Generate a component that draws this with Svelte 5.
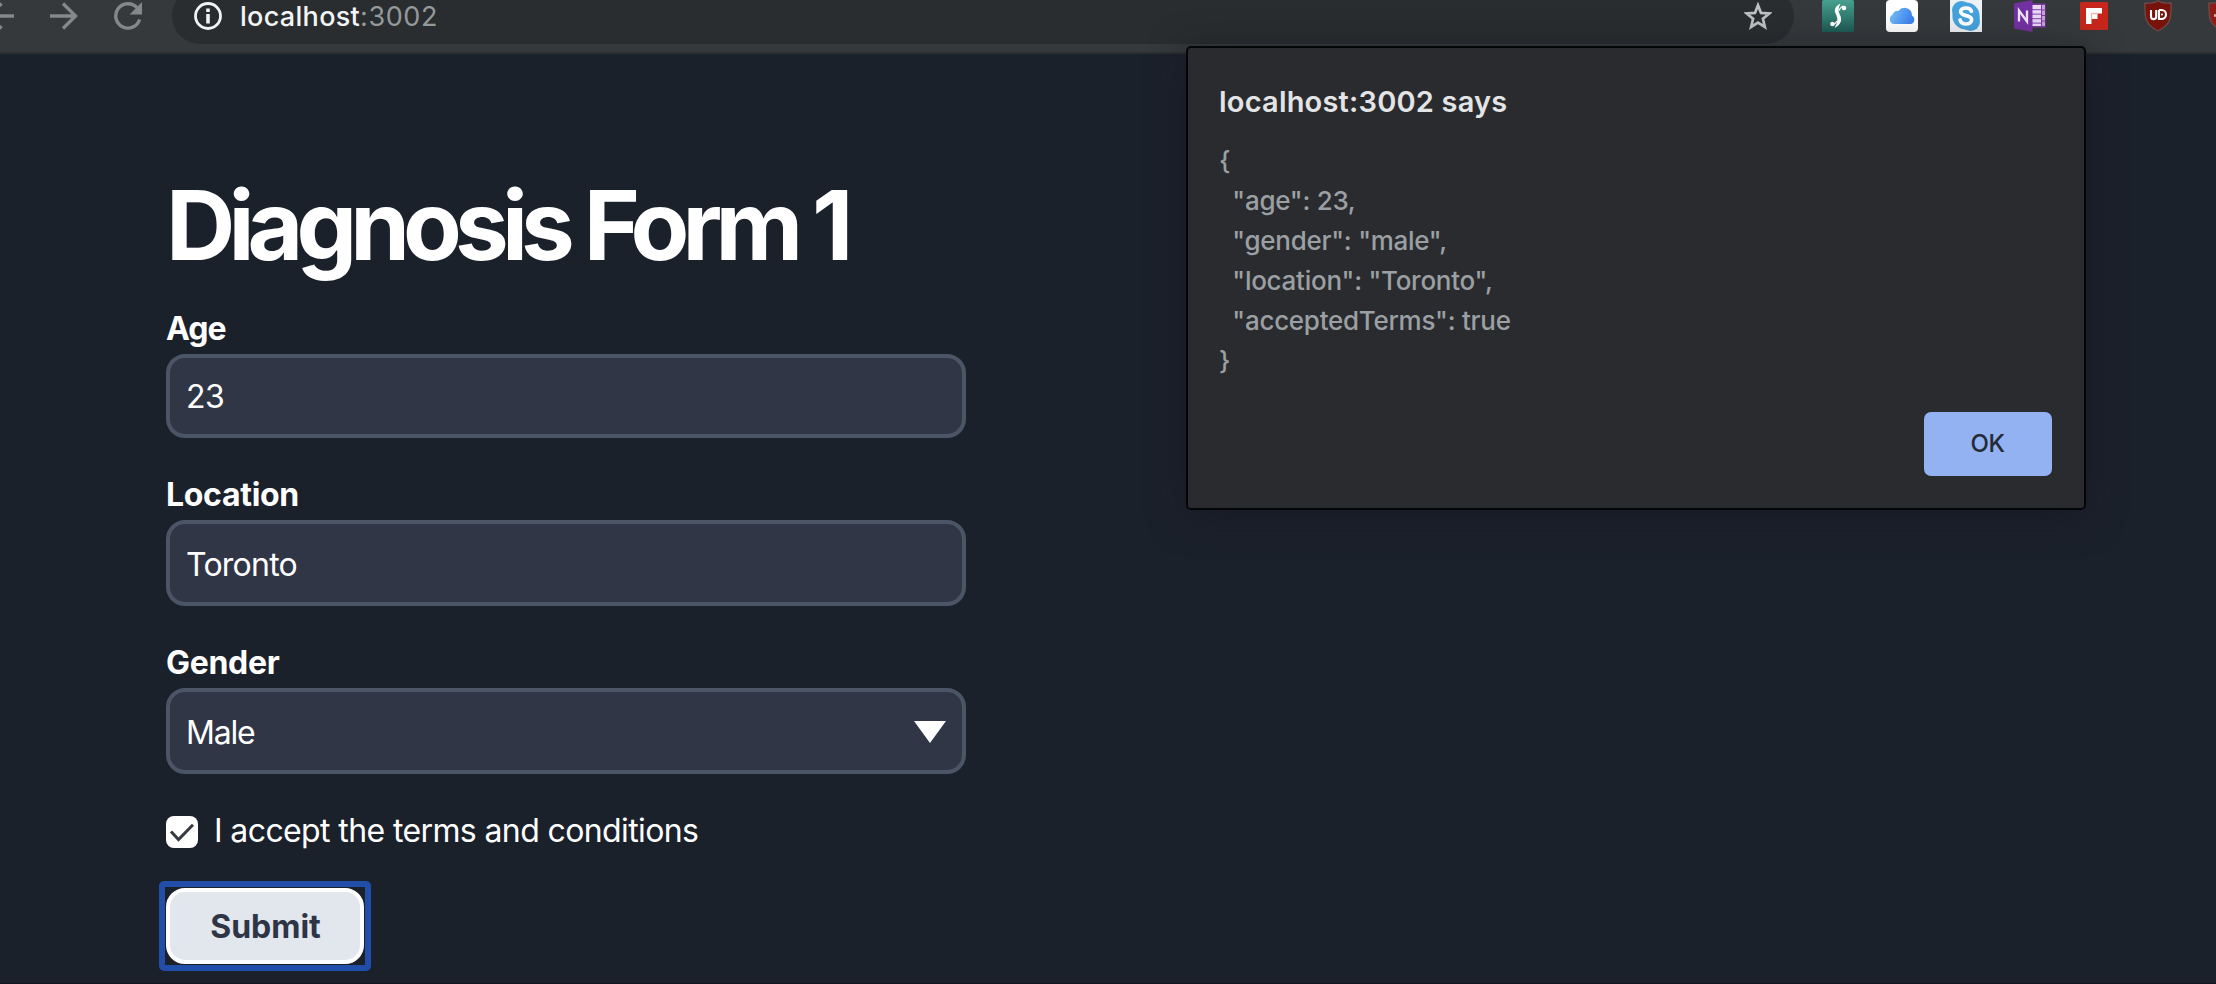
<script>
  const title = 'Diagnosis Form 1';
  const age = 23;
  const location = 'Toronto';
  const gender = 'Male';
  const host = 'localhost';
  const port = ':3002';
  const message = JSON.stringify(
    { age, gender: gender.toLowerCase(), location, acceptedTerms: true },
    null,
    2
  );
</script>

<div class="window">
  <header class="toolbar">
    <nav class="nav">
      <svg viewBox="0 0 28 28" class="stroke"><path d="M28 14H3M15.500 1.500 2.500 14 15.500 26.500" /></svg>
      <svg viewBox="0 0 28 28" class="stroke"><path d="M0 14h25M13 1.500 25.500 14 13 26.500" /></svg>
      <svg viewBox="0 0 28 28">
        <path d="M25.600 17.500A12.200 12.200 0 1 1 22.800 5.500" fill="none" stroke="#858888" stroke-width="3.400" />
        <path d="M28 0v12.400H15.600z" fill="#858888" />
      </svg>
    </nav>

    <div class="omnibox">
      <svg class="info" viewBox="0 0 28 28">
        <circle cx="14" cy="14" r="12.500" fill="none" stroke="#f1f3f4" stroke-width="2.800" />
        <path d="M12.200 6.500h3.600v3.400h-3.600zM12.200 12h3.600v9.500h-3.600z" fill="#f1f3f4" />
      </svg>
      <span class="url"><b>{host}</b>{port}</span>
      <svg class="star" viewBox="0 0 28 28">
        <path d="M14 3.200l3 7.700 8.200.6-6.300 5.300 2 8.200L14 20.600l-6.900 4.400 2-8.200-6.300-5.300 8.200-.6z" fill="none" stroke="#bdc1c4" stroke-width="2.700" />
      </svg>
    </div>

    <div class="extensions">
      <svg viewBox="0 0 32 32">
        <defs>
          <linearGradient id="teal" x1="0" y1="0" x2="0" y2="1"><stop offset="0" stop-color="#48a08f" /><stop offset="1" stop-color="#1d5b54" /></linearGradient>
        </defs>
        <rect width="32" height="32" rx="1.500" fill="url(#teal)" />
        <path d="M18.500 3.500c-5.500 3-7 6.500-4.500 11 2.200 4 1.500 8-1.500 13.500 6.500-3.500 8-8 5.500-13-2-4-1.800-7 .5-11.500z" fill="#fff" />
        <path d="M17 10.500c1-2.500 2.500-4 4.500-4.500M15 21c-1 2-2.500 3.500-4.500 4" fill="none" stroke="#fff" stroke-width="1.200" />
        <circle cx="22" cy="8" r="2.300" fill="#fff" />
        <circle cx="10.500" cy="24" r="2.300" fill="#fff" />
      </svg>
      <svg viewBox="0 0 32 32">
        <defs>
          <linearGradient id="sky" x1="0" y1="0" x2="1" y2="0.300"><stop offset="0" stop-color="#7cc4f8" /><stop offset="1" stop-color="#3d82f0" /></linearGradient>
        </defs>
        <rect width="32" height="32" rx="4" fill="#fff" />
        <path d="M8.500 24a5 5 0 0 1-4.700-4.800c0-2.200 1.200-4.200 3-4.800a4.400 4.400 0 0 1 5.600-3.500 7.600 7.600 0 0 1 13.600 4.500c4 2.500 2.500 8.600-1.500 8.600z" fill="url(#sky)" />
      </svg>
      <svg viewBox="0 0 32 32">
        <rect width="32" height="32" fill="#eef1f3" />
        <circle cx="11.500" cy="10.500" r="9.500" fill="#45a2dd" />
        <circle cx="20.500" cy="21.500" r="9.500" fill="#45a2dd" />
        <circle cx="16" cy="16" r="13.600" fill="#45a2dd" />
        <path d="M21.500 11.200C20.500 8.800 18.500 8 16 8c-3.200 0-5.300 1.500-5.300 3.800 0 5 10.900 2.600 10.900 7.700 0 2.700-2.200 4.500-5.600 4.500-3 0-5.200-1.200-5.900-4" fill="none" stroke="#fff" stroke-width="3.700" stroke-linecap="round" />
      </svg>
      <svg viewBox="0 0 32 32">
        <path d="M17 3.500h14.500v24H17z" fill="#7c3aa8" />
        <path d="M18 5h9v21h-9z" fill="#ead9f3" />
        <path d="M28 5h3v4.500h-3zM28 10.500h3V15h-3zM28 16h3v4.500h-3zM28 21.500h3V26h-3z" fill="#c99fdd" />
        <path d="M18 9.700h9M18 14.200h9M18 18.700h9M18 23.200h9" stroke="#9a5fc0" stroke-width="1.200" />
        <path d="M0 3.500 18.500 0v32L0 28.500z" fill="#7330a2" />
        <path d="M5 21.500v-11l8 11v-11" fill="none" stroke="#efe3f6" stroke-width="2.300" />
      </svg>
      <svg viewBox="0 0 32 32">
        <rect x="2" y="2" width="28" height="28" rx="1.500" fill="#c6261b" />
        <path d="M8 8h16v5.500h-4.500V19h-6v5H8z" fill="#fff" />
        <path d="M13.500 13.500h6M13.500 13.500V19" stroke="#efb6b2" stroke-width="1.300" />
      </svg>
      <svg viewBox="0 0 32 32">
        <path d="M16 .8c3.500 2.200 8.500 2.400 13.200 2.400 0 15-.2 21-13.200 27.800C3 24.200 2.800 18.200 2.800 3.200 7.500 3.200 12.500 3 16 .8z" fill="#77130b" stroke="#6b4a48" stroke-width="1.400" />
        <path d="M9 10v6.500a2.600 2.600 0 0 0 5.200 0V10M17 10v9h2.500a4.500 4.500 0 0 0 0-9H17" fill="none" stroke="#fff" stroke-width="2.100" />
        <circle cx="20" cy="14.500" r="1" fill="#fff" />
      </svg>
      <svg viewBox="0 0 32 32">
        <path d="M16 .8c3.500 2.200 8.500 2.400 13.200 2.400 0 15-.2 21-13.200 27.800C3 24.200 2.800 18.200 2.800 3.200 7.500 3.200 12.500 3 16 .8z" fill="#8f1c17" stroke="#6b4a48" stroke-width="1.400" />
        <path d="M8 15.500h5" stroke="#d9b6b4" stroke-width="2.500" />
      </svg>
    </div>
  </header>

  <main class="page">
    <form class="form" onsubmit={(e) => e.preventDefault()}>
      <h1>{title}</h1>

      <div class="field">
        <div class="label age">Age</div>
        <div class="input first">{age}</div>
      </div>

      <div class="field">
        <div class="label">Location</div>
        <div class="input">{location}</div>
      </div>

      <div class="field">
        <div class="label">Gender</div>
        <div class="input select">
          <span>{gender}</span>
          <svg viewBox="0 0 32 22"><path d="M0 0h32L16 22z" fill="#fff" /></svg>
        </div>
      </div>

      <div class="terms">
        <span class="check">
          <svg viewBox="0 0 32 32"><path d="M5 15.500l7.500 8L27 8.800" fill="none" stroke="#373a40" stroke-width="3" /></svg>
        </span>
        <span>I accept the terms and conditions</span>
      </div>

      <div class="focus-ring">
        <button class="submit" type="submit">Submit</button>
      </div>
    </form>
  </main>

  <div class="dialog" role="alertdialog">
    <h2>{host}{port} says</h2>
    <pre>{message}</pre>
    <button class="ok" type="button">OK</button>
  </div>
</div>

<style>
  :global(body) {
    margin: 0;
    background: #1b212b;
  }

  .window {
    position: relative;
    display: flex;
    flex-direction: column;
    width: 2216px;
    height: 984px;
    overflow: hidden;
    box-sizing: border-box;
    background: #1b212b;
    border-bottom: 1px solid #13171e;
    font-family: Inter, "Open Sans", sans-serif;
    color: #fff;
  }

  svg {
    display: block;
    flex: none;
  }

  .toolbar {
    display: flex;
    align-items: center;
    flex: none;
    height: 72px;
    margin-top: -20px;
    background: #35393b;
    border-bottom: 2px solid #2d2e2f;
  }

  .nav {
    display: flex;
    gap: 36px;
    margin-left: -14px;
  }

  .nav svg,
  .info,
  .star {
    width: 28px;
    height: 28px;
  }

  .stroke {
    fill: none;
    stroke: #858888;
    stroke-width: 3.400;
  }

  .omnibox {
    display: flex;
    align-items: center;
    box-sizing: border-box;
    flex: none;
    width: 1622px;
    height: 56px;
    margin-left: 30px;
    padding: 0 22px;
    border-radius: 28px;
    background: #292d2f;
  }

  .url {
    flex: 1;
    margin-left: 18px;
    padding-top: 2px;
    font-size: 27px;
    line-height: 54px;
    letter-spacing: 0.600px;
    color: #94999c;
  }

  .url b {
    font-weight: 500;
    letter-spacing: 0.300px;
    color: #f3f4f5;
  }

  .extensions {
    display: flex;
    gap: 32px;
    margin-left: 28px;
  }

  .extensions svg {
    width: 32px;
    height: 32px;
  }

  .page {
    padding: 123px 0 0 166px;
  }

  .form {
    width: 800px;
  }

  h1 {
    margin: 0 0 32px;
    font-size: 96px;
    line-height: 96px;
    font-weight: 700;
    letter-spacing: -6.880px;
  }

  .field {
    margin-bottom: 33px;
  }

  .label {
    margin-bottom: 1px;
    font-size: 32px;
    line-height: 48px;
    font-weight: 650;
    letter-spacing: -0.300px;
  }

  .label.age {
    letter-spacing: -1px;
  }

  .input {
    display: flex;
    align-items: center;
    justify-content: space-between;
    box-sizing: border-box;
    height: 86px;
    padding: 2px 16px 0;
    border: 4px solid #4b5566;
    border-radius: 19px;
    background: #303646;
    font-size: 32px;
    letter-spacing: -0.750px;
  }

  .input.first {
    height: 84px;
    padding-top: 0;
    letter-spacing: -0.500px;
  }

  .select span {
    letter-spacing: -1.200px;
  }

  .select svg {
    width: 32px;
    height: 22px;
  }

  .terms {
    display: flex;
    align-items: center;
    height: 48px;
    margin-bottom: 26px;
    font-size: 32px;
    line-height: 48px;
    letter-spacing: -0.615px;
  }

  .check {
    display: flex;
    align-items: flex-end;
    width: 32px;
    height: 34px;
    margin-right: 16px;
  }

  .check svg {
    width: 32px;
    height: 32px;
    border-radius: 8px;
    background: #fff;
  }

  button {
    display: block;
    padding: 0;
    font-family: inherit;
  }

  .focus-ring {
    width: 198px;
    margin-left: -7px;
    padding: 1px;
    border: 6px solid #204ea8;
    border-radius: 5px;
  }

  .submit {
    width: 198px;
    height: 76px;
    padding-left: 1px;
    border: 4px solid #fff;
    border-radius: 19px;
    background: #e2e6ed;
    color: #2d3546;
    font-size: 32px;
    font-weight: 650;
  }

  .dialog {
    position: absolute;
    top: 46px;
    left: 1186px;
    box-sizing: border-box;
    width: 900px;
    height: 464px;
    padding: 34px 32px 32px 31px;
    border: 2px solid #050607;
    border-radius: 5px;
    background: #2a2b2e;
    box-shadow: 0 6px 36px rgba(24, 22, 32, 0.600);
  }

  h2 {
    margin: 0 0 19px;
    font-size: 29px;
    line-height: 40px;
    font-weight: 570;
    letter-spacing: 0.200px;
    color: #e3e4e5;
  }

  pre {
    margin: 0 0 31px;
    font-family: inherit;
    font-size: 26px;
    line-height: 40px;
    font-weight: 450;
    letter-spacing: -0.270px;
    color: #9aa0a3;
  }

  .ok {
    width: 128px;
    height: 64px;
    margin-left: auto;
    padding: 0 1px 1px 0;
    border: 0;
    border-radius: 7px;
    background: #92b2f2;
    color: #242a36;
    font-size: 24px;
    font-weight: 500;
    letter-spacing: -0.500px;
  }
</style>
